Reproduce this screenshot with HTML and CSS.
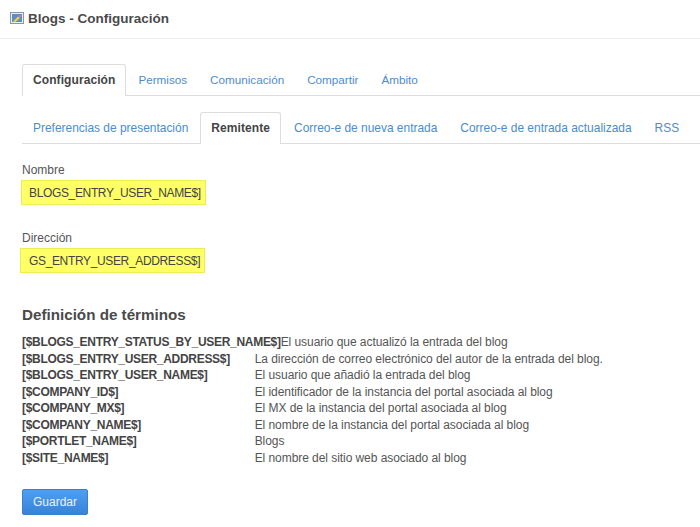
FILE: index.html
```html
<!DOCTYPE html>
<html lang="es">
<head>
    <meta charset="UTF-8"/>
    <title>Blogs - Configuración</title>
    <link rel="stylesheet" href="styles.css">
</head>
<body>
<div id="title-bar">
    <svg class="portlet-icon" width="14" height="12" viewBox="0 0 14 12">
        <rect x="0.5" y="0.5" width="13" height="11" fill="#e8eef5" stroke="#8b95a3"/>
        <rect x="2" y="2" width="10" height="8" fill="#5f8dc0"/>
        <path d="M3 9.5 L8 4.5 L10 6 L5.5 10 Z" fill="#f2cf3a"/>
        <path d="M8.5 4 L11 2.5 L11.5 4.5 L10 5.5 Z" fill="#c77bc0"/>
    </svg>
    <span>Blogs - Configuración</span>
</div>

<div id="content">
    <ul class="tabs tabs-main">
        <li class="active">Configuración</li>
        <li>Permisos</li>
        <li>Comunicación</li>
        <li>Compartir</li>
        <li>Ámbito</li>
    </ul>
    <ul class="tabs tabs-sub">
        <li>Preferencias de presentación</li>
        <li class="active">Remitente</li>
        <li>Correo-e de nueva entrada</li>
        <li>Correo-e de entrada actualizada</li>
        <li>RSS</li>
    </ul>

    <div class="field">
        <label>Nombre</label>
        <div class="mark"><span>BLOGS_ENTRY_USER_NAME$]</span></div>
    </div>
    <div class="field">
        <label>Dirección</label>
        <div class="mark mark-left"><span>GS_ENTRY_USER_ADDRESS$]</span></div>
    </div>

    <h3>Definición de términos</h3>
    <dl class="terms">
        <dt>[$BLOGS_ENTRY_STATUS_BY_USER_NAME$]</dt><dd>El usuario que actualizó la entrada del blog</dd>
        <dt>[$BLOGS_ENTRY_USER_ADDRESS$]</dt><dd class="col">La dirección de correo electrónico del autor de la entrada del blog.</dd>
        <dt>[$BLOGS_ENTRY_USER_NAME$]</dt><dd class="col">El usuario que añadió la entrada del blog</dd>
        <dt>[$COMPANY_ID$]</dt><dd class="col">El identificador de la instancia del portal asociada al blog</dd>
        <dt>[$COMPANY_MX$]</dt><dd class="col">El MX de la instancia del portal asociada al blog</dd>
        <dt>[$COMPANY_NAME$]</dt><dd class="col">El nombre de la instancia del portal asociada al blog</dd>
        <dt>[$PORTLET_NAME$]</dt><dd class="col">Blogs</dd>
        <dt>[$SITE_NAME$]</dt><dd class="col">El nombre del sitio web asociado al blog</dd>
    </dl>

    <button class="save">Guardar</button>
</div>
</body>
</html>
```

FILE: styles.css
```css
* {
    box-sizing: border-box;
}

body {
    margin: 0;
    background-color: #fff;
    color: #555;
    font-family: "Liberation Sans", Arial, sans-serif;
    font-size: 12px;
    overflow: hidden;
}

#title-bar {
    height: 39px;
    padding: 0 10px 2px;
    display: flex;
    align-items: center;
    gap: 4px;
    border-bottom: 1px solid #eee;
    font-size: 13.5px;
    font-weight: bold;
    color: #4a4a4a;
}

#content {
    padding: 25px 0 0 22px;
}

.tabs {
    margin: 0;
    padding: 0;
    list-style: none;
    display: flex;
    border-bottom: 1px solid #ddd;
    color: #4d8ccc;
}

.tabs li {
    height: 31px;
    padding: 8px 10px 0;
    margin-right: 1px;
    border: 1px solid transparent;
    border-bottom: 0;
    white-space: nowrap;
}

.tabs li.active {
    height: 32px;
    margin-bottom: -1px;
    background-color: #fff;
    border-color: #ddd;
    border-radius: 3px 3px 0 0;
    color: #444;
    font-weight: bold;
    letter-spacing: 0.08px;
}

.tabs-main {
    font-size: 11.7px;
}

.tabs-main li.active {
    font-size: 12px;
}

.tabs-sub {
    margin-top: 16px;
    margin-bottom: 18px;
    font-size: 11.95px;
}

.tabs-sub li.active {
    margin-right: 2px;
    font-size: 12px;
}

.field {
    margin-bottom: 25px;
}

.field label {
    display: block;
    margin-bottom: 2px;
    line-height: 16px;
}

.mark {
    width: 185px;
    height: 25px;
    margin-left: -1px;
    padding: 1px 0 0 7px;
    display: flex;
    align-items: center;
    background-color: #ffff66;
    border: 1px solid #eeec50;
    color: #444;
    letter-spacing: -0.35px;
    white-space: nowrap;
}

.mark-left {
    margin-left: -2px;
    padding-left: 8px;
}

h3 {
    margin: 0 0 9px;
    padding-top: 7px;
    font-size: 15.2px;
    line-height: 20px;
    color: #4a4a4a;
}

.terms {
    margin: 0 0 23px;
    display: grid;
    grid-template-columns: auto 1fr;
    line-height: 16.5px;
}

.terms dt {
    font-weight: bold;
    color: #444;
    letter-spacing: -0.3px;
    white-space: nowrap;
}

.terms dd {
    margin: 0;
    white-space: nowrap;
    letter-spacing: -0.06px;
}

.terms dd.col {
    margin-left: -26px;
}

.save {
    width: 66px;
    height: 26px;
    padding: 0;
    background-color: #3f92e6;
    background-image: linear-gradient(#4f9ef0, #3584da);
    border: 1px solid #3a80c9;
    border-radius: 2px;
    color: #e8f2fc;
    font-family: inherit;
    font-size: 12px;
}
```
